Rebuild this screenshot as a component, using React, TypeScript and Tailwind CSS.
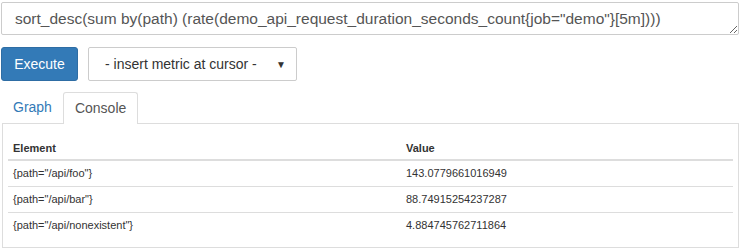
import { useState } from "react";

interface Row {
  element: string;
  value: string;
}

const rows: Row[] = [
  { element: '{path="/api/foo"}', value: "143.0779661016949" },
  { element: '{path="/api/bar"}', value: "88.74915254237287" },
  { element: '{path="/api/nonexistent"}', value: "4.884745762711864" },
];

const font = { fontFamily: '"Liberation Sans", Arial, sans-serif' };

export default function App() {
  const [expr, setExpr] = useState(
    'sort_desc(sum by(path) (rate(demo_api_request_duration_seconds_count{job="demo"}[5m])))'
  );

  return (
    <div className="bg-white w-[741px] h-[251px] pl-[1px] pt-[2px] text-[#333]" style={font}>
      <textarea
        value={expr}
        onChange={(e) => setExpr(e.target.value)}
        className="block w-[738px] h-[33px] border border-[#ccc] rounded-[2px] pl-[13px] pr-[12px] py-[6px] text-[15.5px] leading-[20px] text-[#555] outline-none resize-y overflow-hidden"
        style={font}
      />

      <div className="flex items-center gap-[10px] mt-[12px]">
        <button className="w-[77px] h-[34px] bg-[#337ab7] border border-[#2e6da4] rounded-[3px] text-white text-[14px]">
          Execute
        </button>
        <div className="w-[209px] h-[34px] border border-[#ccc] rounded-[2px] flex items-center pl-[16px] pr-[8px] text-[14px] text-[#333]">
          <span className="flex-1">- insert metric at cursor -</span>
          <span className="text-[10px] pr-[2px]">▼</span>
        </div>
      </div>

      <div className="mt-[11px] ml-[1px] w-[737px]">
        <div className="flex h-[31px] items-end">
          <div className="h-[31px] pl-[11px] pr-[11px] flex items-center text-[14px] text-[#337ab7]">Graph</div>
          <div className="h-[32px] px-[11px] flex items-center text-[14px] text-[#555] bg-white border border-[#ddd] border-b-0 rounded-t-[3px] -mb-[1px] relative z-10">
            Console
          </div>
        </div>
        <div className="border border-[#ddd] px-[5px] pt-[14px] h-[125px]">
          <table className="w-full border-collapse text-[11px]">
            <thead>
              <tr>
                <th className="w-[393px] h-[22px] text-left font-bold pl-[5px] border-b-2 border-[#ddd]">Element</th>
                <th className="h-[22px] text-left font-bold pl-[5px] border-b-2 border-[#ddd]">Value</th>
              </tr>
            </thead>
            <tbody>
              {rows.map((r, i) => (
                <tr key={i} className={i < rows.length - 1 ? "border-b border-[#ddd]" : ""}>
                  <td className="h-[26px] pl-[5px]">{r.element}</td>
                  <td className="h-[26px] pl-[5px]">{r.value}</td>
                </tr>
              ))}
            </tbody>
          </table>
        </div>
      </div>
    </div>
  );
}
